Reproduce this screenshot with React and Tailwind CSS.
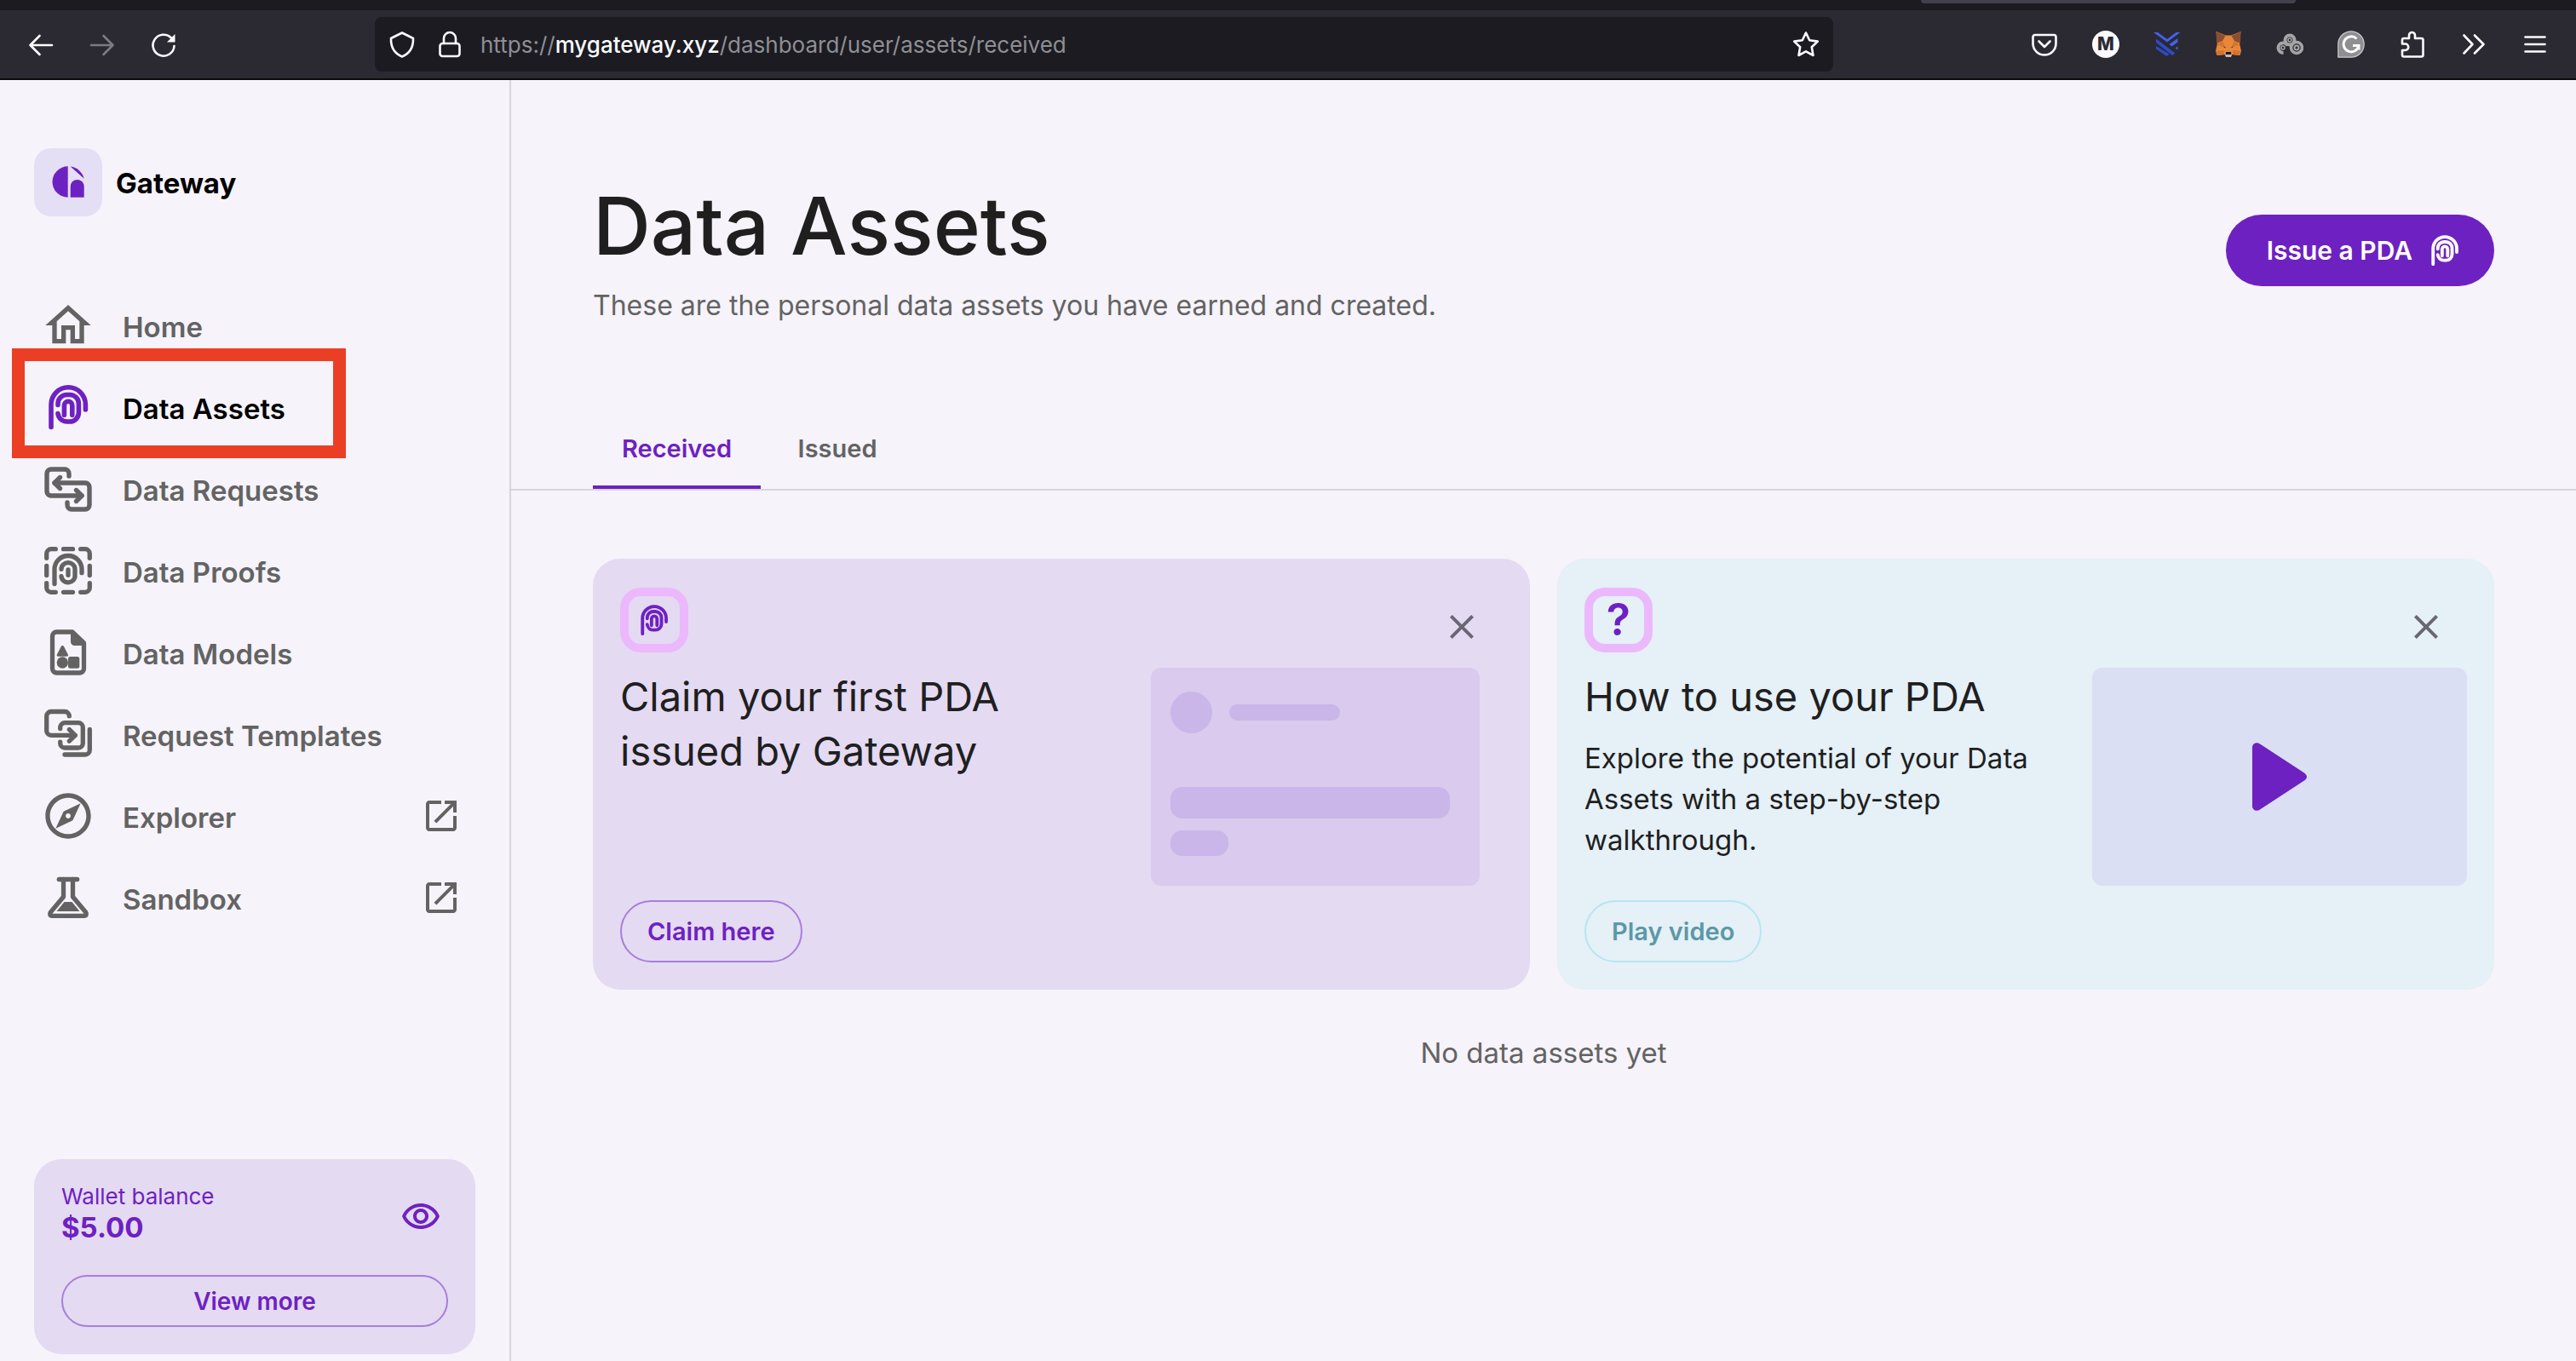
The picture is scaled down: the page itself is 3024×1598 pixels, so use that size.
function Svg({ className, box = 64, children }) {
  return (
    <svg viewBox={`0 0 ${box} ${box}`} className={className} fill="none" stroke="none" aria-hidden="true">
      {children}
    </svg>
  );
}

const line = { fill: "none", stroke: "currentColor", strokeLinecap: "round", strokeLinejoin: "round" };

/* ---------- product icons ---------- */

function Fingerprint({ className }) {
  return (
    <Svg className={className}>
      <g {...line} strokeWidth="5.6">
        <path d="M12 55.5V29a20.2 20.2 0 0 1 40.4 0v6" />
        <path d="M20 29.5V28a10.5 10.5 0 0 1 10.5-10.5h3.4A10.5 10.5 0 0 1 44.4 28v10.5A10.5 10.5 0 0 1 33.9 49h-3.4A10.5 10.5 0 0 1 20 39.5" />
        <path d="M27.4 41.2V30a4.7 4.7 0 0 1 9.4 0V41.2" />
      </g>
    </Svg>
  );
}

function HomeIcon({ className }) {
  return (
    <Svg className={className} box={24}>
      <path fill="currentColor" d="M12 5.69l5 4.5V18h-2v-6H9v6H7v-7.81l5-4.5M12 3L2 12h3v8h6v-6h2v6h6v-8h3L12 3z" />
    </Svg>
  );
}

function RequestsIcon({ className }) {
  return (
    <Svg className={className}>
      <g {...line} strokeWidth="5.4">
        <path d="M33 17v-3a5 5 0 0 0-5-5H12a5 5 0 0 0-5 5v21a5 5 0 0 0 5 5h36" />
        <path d="M41.5 33.5L48 40l-6.5 6.5" />
        <path d="M31 48v3a5 5 0 0 0 5 5h16a5 5 0 0 0 5-5V30a5 5 0 0 0-5-5H16" />
        <path d="M22.5 18.5L16 25l6.5 6.5" />
      </g>
    </Svg>
  );
}

function ProofsIcon({ className }) {
  return (
    <Svg className={className}>
      <g {...line} strokeWidth="5.3">
        <path d="M17.3 6.7H12a5.3 5.3 0 0 0-5.3 5.3v5.3M46.7 6.7H52a5.3 5.3 0 0 1 5.3 5.3v5.3M17.3 57.3H12A5.3 5.3 0 0 1 6.7 52v-5.3M46.7 57.3H52a5.3 5.3 0 0 0 5.3-5.3v-5.3" />
        <path d="M26.5 6.7h11M26.5 57.3h11M6.7 26.5v11M57.3 26.5v11" />
        <path d="M16 47.5V30.5a16 16 0 0 1 32 0v4.2" />
        <path d="M24 30.3a8 7.6 0 0 1 16 0v7.4a8 7.6 0 0 1-16 1" />
        <path d="M32 31v6.3" />
      </g>
    </Svg>
  );
}

function ModelsIcon({ className }) {
  return (
    <Svg className={className}>
      <path {...line} strokeWidth="5.3" d="M37 8H18.5a5 5 0 0 0-5 5v38a5 5 0 0 0 5 5h27a5 5 0 0 0 5-5V21z" />
      <path fill="currentColor" d="M35 7h3.5L52 20.500V24H39.5a4.500 4.500 0 0 1-4.500-4.500zM25.300 24q1.200 0 1.800 1.200l4.700 9.300q.8 2.200-1.300 2.200H20.200q-2.200 0-1.300-2.200l4.700-9.300q.6-1.200 1.700-1.200z" />
      <circle fill="currentColor" cx="25.3" cy="44" r="6.7" />
      <rect fill="currentColor" x="32" y="37" width="13.3" height="13.7" rx="2.5" />
    </Svg>
  );
}

function TemplatesIcon({ className }) {
  return (
    <Svg className={className}>
      <g {...line} strokeWidth="5.3">
        <path d="M33.3 10.7A5.3 5.3 0 0 0 28 5.5H12a5.3 5.3 0 0 0-5.3 5.3V28A5.3 5.3 0 0 0 12 33.3h28" />
        <path d="M33.3 26.5l7 6.8-7 6.9" />
        <path d="M22.7 25.5V24a5.3 5.3 0 0 1 5.3-5.3h16a5.3 5.3 0 0 1 5.3 5.3v18.7A5.3 5.3 0 0 1 44 48H28a5.3 5.3 0 0 1-5.3-5.3v-1.500" />
        <path d="M57.3 26.5v24.2A5.3 5.3 0 0 1 52 56H28" />
      </g>
    </Svg>
  );
}

function ExplorerIcon({ className }) {
  return (
    <Svg className={className} box={24}>
      <path fill="currentColor" d="M12 2C6.48 2 2 6.48 2 12s4.48 10 10 10 10-4.48 10-10S17.52 2 12 2zm0 18c-4.41 0-8-3.59-8-8s3.59-8 8-8 8 3.59 8 8-3.59 8-8 8zm-5.5-2.5l7.51-3.49L17.5 6.5 9.99 9.99 6.5 17.5zm5.5-6.6c.61 0 1.1.49 1.1 1.1s-.49 1.1-1.1 1.1-1.1-.49-1.1-1.1.49-1.1 1.1-1.1z" />
    </Svg>
  );
}

function SandboxIcon({ className }) {
  return (
    <Svg className={className}>
      <g {...line} strokeWidth="5.3">
        <path d="M21.3 10.5h21.4" />
        <path d="M26.5 10.5V31L11.2 49.3c-1.4 1.9-.4 4 2 4h37.6c2.4 0 3.4-2.1 2-4L37.5 31V10.5" />
      </g>
      <path fill="currentColor" d="M27.500 37h9L45.500 48h-27z" />
    </Svg>
  );
}

function OpenInNew({ className }) {
  return (
    <Svg className={className} box={24}>
      <path fill="currentColor" d="M19 19H5V5h7V3H5c-1.11 0-2 .9-2 2v14c0 1.1.89 2 2 2h14c1.1 0 2-.9 2-2v-7h-2v7zM14 3v2h3.59l-9.83 9.83 1.41 1.41L19 6.41V10h2V3h-7z" />
    </Svg>
  );
}

function EyeIcon({ className }) {
  return (
    <Svg className={className} box={24}>
      <path fill="currentColor" d="M12 6c3.79 0 7.17 2.13 8.82 5.5C19.17 14.87 15.79 17 12 17s-7.17-2.13-8.82-5.5C4.83 8.13 8.21 6 12 6m0-2C7 4 2.73 7.11 1 11.5 2.73 15.89 7 19 12 19s9.27-3.11 11-7.5C21.27 7.11 17 4 12 4zm0 5c1.38 0 2.5 1.12 2.5 2.5S13.38 14 12 14s-2.5-1.12-2.5-2.5S10.62 9 12 9m0-2c-2.48 0-4.5 2.02-4.5 4.5S9.52 16 12 16s4.5-2.02 4.5-4.5S14.48 7 12 7z" />
    </Svg>
  );
}

function CloseIcon({ className }) {
  return (
    <Svg className={className} box={24}>
      <path fill="currentColor" d="M19 6.41L17.59 5 12 10.59 6.41 5 5 6.41 10.59 12 5 17.59 6.41 19 12 13.41 17.59 19 19 17.59 13.41 12z" />
    </Svg>
  );
}

function GatewayLogo() {
  return (
    <Svg className="size-20 shrink-0 rounded-[20px] bg-[#e5dff5] text-[#6e21c1]" box={80}>
      <g fill="currentColor">
        <path d="M39.7 21.3v36.4a18.2 18.2 0 0 1 0-36.4z" />
        <path d="M42.7 21.6a18.5 18.5 0 0 1 16 14.2z" />
        <path d="M42.7 57.7V45a8 8 0 0 1 16 0v12.7z" />
      </g>
    </Svg>
  );
}

/* ---------- browser chrome ---------- */

const chrome = { fill: "none", stroke: "currentColor", strokeWidth: 2.6, strokeLinecap: "round", strokeLinejoin: "round" };

function ChromeButton({ label, className = "text-[#fbfbfe]", children }) {
  return (
    <button type="button" aria-label={label} className={`flex size-8 shrink-0 items-center justify-center ${className}`}>
      <svg viewBox="0 0 32 32" className="size-8" aria-hidden="true">{children}</svg>
    </button>
  );
}

function BrowserBar() {
  return (
    <header className="shrink-0 bg-[#1c1b22]">
      <div className="flex h-3 pl-[2255px]">
        <div className="h-1 w-[440px] rounded-b bg-[#42414d]" />
      </div>
      <div className="flex h-[82px] items-center border-b-2 border-[#0c0c0d] bg-[#2b2a33] px-8">
        <div className="flex gap-10">
          <ChromeButton label="Back">
            <path {...chrome} d="M29 17H3.500M14.500 6l-11 11 11 11" />
          </ChromeButton>
          <ChromeButton label="Forward" className="text-[#7c7b82]">
            <path {...chrome} d="M3 17h25.500M17.500 6l11 11-11 11" />
          </ChromeButton>
          <ChromeButton label="Reload">
            <path {...chrome} d="M28.500 18A12.500 12.500 0 1 1 25 8.500" />
            <path fill="currentColor" d="M29.500 4v9.500h-9.500z" />
          </ChromeButton>
        </div>
        <div className="mx-[232px] flex h-16 min-w-0 flex-1 items-center rounded-lg bg-[#1c1b22] px-4">
          <div className="flex gap-6">
            <ChromeButton label="Tracking protection">
              <path {...chrome} d="M16 2.500L29 9c.3 9-3.500 17.500-13 21.500C6.500 26.500 2.700 18 3 9z" />
            </ChromeButton>
            <ChromeButton label="Site information">
              <path {...chrome} d="M9 15V9a7 7 0 0 1 14 0v6" />
              <rect {...chrome} x="4.5" y="15" width="23" height="15" rx="3" />
            </ChromeButton>
          </div>
          <p className="ml-5 min-w-0 flex-1 truncate pt-0.5 text-[26px] leading-9 text-[#8f8f93]">
            https://<span className="font-medium text-[#fbfbfe]">mygateway.xyz</span>/dashboard/user/assets/received
          </p>
          <ChromeButton label="Bookmark this page">
            <path {...chrome} d="M16 2.500l4.200 8.800 9.600 1.300-7 6.700 1.700 9.700L16 24.400 7.500 29l1.700-9.700-7-6.700 9.600-1.300z" />
          </ChromeButton>
        </div>
        <div className="flex gap-10">
          <ChromeButton label="Save to Pocket">
            <path {...chrome} d="M5 5h22a2.500 2.500 0 0 1 2.500 2.500V15a13.500 13.500 0 0 1-27 0V7.500A2.500 2.500 0 0 1 5 5z" />
            <path {...chrome} d="M9.500 12.500L16 19l6.500-6.500" />
          </ChromeButton>
          <button type="button" aria-label="Profile M" className="flex size-8 shrink-0 items-center justify-center rounded-full bg-[#fbfbfe] text-[21px] leading-8 font-extrabold text-[#2b2a33]">
            M
          </button>
          <ChromeButton label="Layers extension">
            <path fill="#4361ee" d="M0 2h5l11 8 10.500-8h5L16 13.500z" />
            <path fill="#2c4bc6" d="M3 9.500l22.500 17-3.500 2.500L3 14zM3 18l15.500 9.500L15.500 30 3 21.500z" />
            <path fill="#4361ee" d="M28.500 9v4.500L21.500 18.500l-3-2.500zM28.500 18.500v4l-3-2z" />
          </ChromeButton>
          <ChromeButton label="Fox wallet">
            <path fill="#e8873a" d="M1.500 1L13 5.500h6L30.500 1 29 15l2 9-1.500 5-8-1h-11l-8 1L1 24l2-9z" />
            <path fill="#8b4f2e" d="M1.500 1l11 5L9 12l-7 3zM30.500 1l-11 5 3.500 6 7 3z" />
            <path fill="#d6732c" d="M9 12l3 7-9-2zM23 12l-3 7 9-2zM1 24l9-1 2.500 5-8 1zM31 24l-9-1-2.500 5 8 1z" />
            <path fill="#3a3f4d" d="M9.500 18l3.500 1.500-1 1zM22.500 18L19 19.500l1 1z" />
            <path fill="#c9bbae" d="M11 26h10l-2 5h-6z" />
            <path fill="#1b1a1f" d="M13 25h6l.5 3h-7z" />
          </ChromeButton>
          <ChromeButton label="Rings extension">
            <g fill="none" stroke="#a5a5a8">
              <circle cx="16" cy="11" r="5.5" strokeWidth="4" />
              <circle cx="16" cy="11" r="2" strokeWidth="1.5" />
              <path strokeWidth="4" d="M8.500 26A5.800 5.800 0 1 1 13.500 17.500" />
              <circle cx="8" cy="20" r="2" strokeWidth="1.5" />
              <circle cx="24" cy="20" r="6.500" strokeWidth="3.5" />
              <circle cx="24" cy="20" r="2.500" strokeWidth="2" />
            </g>
          </ChromeButton>
          <ChromeButton label="Grammar extension">
            <path fill="#8f8f91" stroke="#c9c9cb" strokeWidth="1.2" d="M.8 31.200V16A15.200 15.200 0 1 1 16 31.200z" />
            <path fill="none" stroke="#fbfbfe" strokeWidth="3" d="M22.500 9.500A9 9 0 1 0 25 17.500h-7M25 17.500v5" />
          </ChromeButton>
          <ChromeButton label="Extensions">
            <path {...chrome} d="M4 15.500V11a2 2 0 0 1 2-2h6V5.500a3.500 3.500 0 0 1 7 0V9h7.500a2 2 0 0 1 2 2v17.500a2 2 0 0 1-2 2H6a2 2 0 0 1-2-2V23h3.500a3.500 3.500 0 0 0 0-7.500z" />
          </ChromeButton>
          <ChromeButton label="More tools">
            <path {...chrome} d="M4.500 5.500L14.500 16 4.500 26.500M17 5.500L27.500 16 17 26.500" />
          </ChromeButton>
          <ChromeButton label="Open application menu">
            <path {...chrome} d="M4.500 7.500h23M4.500 16h23M4.500 24.500h23" />
          </ChromeButton>
        </div>
      </div>
    </header>
  );
}

/* ---------- sidebar ---------- */

const NAV = [
  { label: "Home", Icon: HomeIcon },
  { label: "Data Assets", Icon: Fingerprint, active: true },
  { label: "Data Requests", Icon: RequestsIcon },
  { label: "Data Proofs", Icon: ProofsIcon },
  { label: "Data Models", Icon: ModelsIcon },
  { label: "Request Templates", Icon: TemplatesIcon },
  { label: "Explorer", Icon: ExplorerIcon, external: true },
  { label: "Sandbox", Icon: SandboxIcon, external: true },
];

function NavItem({ label, Icon, active, external }) {
  return (
    <li className="relative">
      <a href="#" aria-current={active ? "page" : undefined} className="flex h-24 items-center gap-8 pr-4 pl-2 text-[#636363]">
        <Icon className={active ? "size-16 shrink-0 text-[#6e21c1]" : "size-16 shrink-0"} />
        <span className={active ? "flex-1 pt-1 text-[33px] leading-10 font-semibold text-black" : "flex-1 pt-1 text-[33px] leading-10 font-semibold"}>{label}</span>
        {external && <OpenInNew className="size-12 shrink-0" />}
      </a>
      {active && <div className="pointer-events-none absolute -top-[21px] -left-[26px] h-[129px] w-[392px] border-[15px] border-[#eb3f25]" />}
    </li>
  );
}

function Sidebar() {
  return (
    <aside className="flex w-[600px] shrink-0 flex-col border-r-2 border-[#d7d4dc] px-10 pt-20 pb-2">
      <a href="#" className="flex items-center gap-4 text-[33px] leading-10 font-bold text-black">
        <GatewayLogo />
        <span className="pt-0.5">Gateway</span>
      </a>
      <nav className="mt-20">
        <ul>
          {NAV.map((item) => (
            <NavItem key={item.label} {...item} />
          ))}
        </ul>
      </nav>
      <section className="mt-auto rounded-[32px] bg-[#e4daf2] px-8 pt-[26px] pb-8 text-[#6e21c1]">
        <div className="flex items-center justify-between">
          <div>
            <p className="text-[26px] leading-9">Wallet balance</p>
            <p className="text-[33px] leading-9 font-bold">$5.00</p>
          </div>
          <button type="button" aria-label="Hide balance" className="mt-3 mr-2">
            <EyeIcon className="size-12" />
          </button>
        </div>
        <button type="button" className="mt-[38px] flex h-[61px] w-full items-center justify-center rounded-full border-2 border-[#a87edb] text-[28px] leading-9 font-semibold">
          View more
        </button>
      </section>
    </aside>
  );
}

/* ---------- main ---------- */

function PromoCard({ className, icon, title, text, action, actionClass, art }) {
  return (
    <article className={`flex min-w-0 flex-1 justify-between rounded-[32px] ${className}`}>
      <div className="flex min-w-0 flex-col items-start pt-[34px] pb-8 pl-8">
        <div className="flex h-[76px] w-20 items-center justify-center rounded-3xl border-[10px] border-[#ecb8fc] text-[#6e21c1]">{icon}</div>
        <h2 className="mt-5 max-w-[560px] text-[47px] leading-[64px] text-[#1f1f1f]">{title}</h2>
        {text && <p className="mt-4 max-w-[560px] text-[33px] leading-[48px] text-[#1f1f1f]">{text}</p>}
        <button type="button" className={`mt-auto flex h-[73px] items-center rounded-full border-2 px-[30px] text-[29px] leading-9 font-semibold ${actionClass}`}>
          {action}
        </button>
      </div>
      <div className="flex shrink-0 flex-col items-end pt-14">
        <button type="button" aria-label="Dismiss" className="mr-14 text-[#6b6673]">
          <CloseIcon className="size-12" />
        </button>
        {art}
      </div>
    </article>
  );
}

function CredentialArt() {
  return (
    <div className="mt-6 mr-[59px] flex h-64 w-[386px] flex-col rounded-xl bg-[#dacaee] px-[23px] pt-7">
      <div className="flex items-center gap-5">
        <div className="size-[49px] rounded-full bg-[#cab6e8]" />
        <div className="h-[19px] w-[130px] rounded-[10px] bg-[#cab6e8]" />
      </div>
      <div className="mt-[63px] h-[37px] w-[328px] rounded-[14px] bg-[#cab6e8]" />
      <div className="mt-3.5 h-[30px] w-[68px] rounded-[14px] bg-[#cab6e8]" />
    </div>
  );
}

function VideoArt() {
  return (
    <div className="mt-6 mr-8 flex h-64 w-[440px] items-center justify-center rounded-xl bg-[#dadff3]">
      <svg viewBox="0 0 64 80" className="h-20 w-16 text-[#6e21c1]" aria-hidden="true">
        <path fill="currentColor" d="M0 5.500C0 1 5 -1.500 9 1.500L61 35.500c4 3 4 6 0 9L9 78.500C5 81.500 0 79 0 74.500z" />
      </svg>
    </div>
  );
}

export default function App() {
  return (
    <div className="flex min-h-screen flex-col bg-[#f6f3fa] font-[Inter,sans-serif]">
      <BrowserBar />
      <div className="flex flex-1">
        <Sidebar />
        <main className="min-w-0 flex-1">
          <div className="flex items-center justify-between px-24 pt-[115px]">
            <div>
              <h1 className="text-[94px] leading-[112px] font-medium text-[#1f1f1f]">Data Assets</h1>
              <p className="mt-3.5 text-[32px] leading-[48px] text-[#636363]">These are the personal data assets you have earned and created.</p>
            </div>
            <button type="button" className="mb-1 flex h-[84px] shrink-0 items-center gap-4 rounded-full bg-[#6e21c1] pr-9 pl-12 text-[30px] leading-10 font-semibold text-white">
              Issue a PDA
              <Fingerprint className="size-11" />
            </button>
          </div>
          <div role="tablist" className="mt-[95px] flex border-b-2 border-[#d7d4dc] px-24 text-[29px] leading-9 font-semibold">
            <button type="button" role="tab" aria-selected="true" className="h-24 min-w-[180px] border-b-4 border-[#6e21c1] px-[34px] pt-1.5 text-[#6e21c1]">
              Received
            </button>
            <button type="button" role="tab" aria-selected="false" className="h-24 min-w-[180px] border-b-4 border-transparent px-[34px] pt-1.5 text-[#636363]">
              Issued
            </button>
          </div>
          <div className="box-content flex min-h-[506px] gap-8 px-24 pt-20">
            <PromoCard
              className="bg-[#e4daf2]"
              icon={<Fingerprint className="size-11" />}
              title="Claim your first PDA issued by Gateway"
              action="Claim here"
              actionClass="border-[#a87edb] text-[#6e21c1]"
              art={<CredentialArt />}
            />
            <PromoCard
              className="bg-[#e5f0f7]"
              icon={<span className="text-[52px] leading-[56px] font-semibold">?</span>}
              title="How to use your PDA"
              text="Explore the potential of your Data Assets with a step-by-step walkthrough."
              action="Play video"
              actionClass="border-[#b7e5f1] text-[#5c98a5]"
              art={<VideoArt />}
            />
          </div>
          <p className="mt-[50px] px-24 text-center text-[33px] leading-[48px] text-[#636363]">No data assets yet</p>
        </main>
      </div>
    </div>
  );
}
